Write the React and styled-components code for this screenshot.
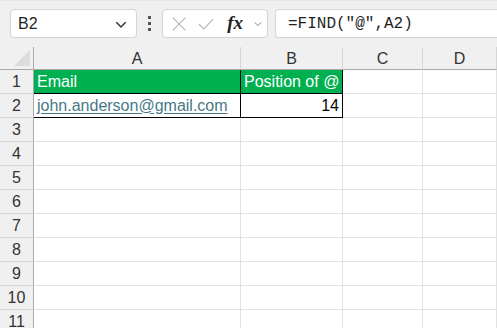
import React from "react";
import styled, { createGlobalStyle } from "styled-components";

const Global = createGlobalStyle`
  html, body { margin: 0; padding: 0; background: #f0f0f0; }
  body { font-family: "Liberation Sans", Arial, sans-serif; overflow: hidden; }
`;

const Page = styled.div`
  width: 497px;
  height: 328px;
  overflow: hidden;
  background: #f0f0f0;
`;

const FormulaBar = styled.div`
  height: 47px;
  box-sizing: border-box;
  padding: 8px 0 0 10px;
  display: flex;
  align-items: flex-start;
  border-top: 1px solid #e6e6e6;
`;

const Box = styled.div`
  height: 29px;
  box-sizing: border-box;
  background: #fff;
  border: 1px solid #d4d4d4;
  border-radius: 4px;
  display: flex;
  align-items: center;
`;

const NameBox = styled(Box)`
  width: 127px;
  padding: 0 8px 0 7px;
  justify-content: space-between;
  font-size: 16px;
  color: #1f1f1f;
`;

const Dots = styled.div`
  width: 25px;
  height: 29px;
  display: flex;
  flex-direction: column;
  align-items: center;
  justify-content: center;
  gap: 3px;
  span {
    width: 3px;
    height: 3px;
    background: #555;
  }
`;

const FxBox = styled(Box)`
  width: 106px;
  padding: 0 4px 0 8px;
  gap: 10px;
`;

const FxText = styled.span`
  font-family: "Liberation Serif", "Times New Roman", serif;
  font-style: italic;
  font-weight: bold;
  font-size: 19px;
  color: #222;
  margin-left: 2px;
  margin-top: -2px;
`;

const FormulaInput = styled(Box)`
  flex: 1;
  margin-left: 7px;
  border-right: none;
  border-radius: 4px 0 0 4px;
  padding-left: 12px;
  font-family: "Liberation Mono", "DejaVu Sans Mono", monospace;
  font-size: 16px;
  color: #1f1f1f;
`;

const Grid = styled.div`
  display: grid;
  grid-template-columns: 34px 207px 102px 80px 1fr;
  grid-template-rows: 23px repeat(11, 24px);
  background: #fff;
`;

const Cell = styled.div`
  box-sizing: border-box;
  border-right: 1px solid ${(p) => p.$right || "#e1e1e1"};
  border-bottom: 1px solid ${(p) => p.$bottom || "#e1e1e1"};
  background: ${(p) => p.$bg || "#fff"};
  color: ${(p) => p.$color || "#000"};
  font-size: 16px;
  display: flex;
  align-items: center;
  justify-content: ${(p) => (p.$align === "right" ? "flex-end" : "flex-start")};
  padding: 0 3px;
  white-space: nowrap;
  overflow: visible;
`;

const ColHead = styled.div`
  box-sizing: border-box;
  background: #f0f0f0;
  border-right: 1px solid #d6d6d6;
  border-bottom: 1px solid #a8a8a8;
  display: flex;
  align-items: center;
  justify-content: center;
  font-size: 16px;
  color: #333;
  padding-top: 1px;
`;

const Corner = styled(ColHead)`
  border-right: 1px solid #a8a8a8;
  position: relative;
  &::after {
    content: "";
    position: absolute;
    right: 3px;
    bottom: 3px;
    border-left: 16px solid transparent;
    border-bottom: 16px solid #dcdcdc;
  }
`;

const RowHead = styled.div`
  box-sizing: border-box;
  background: #f0f0f0;
  border-right: 1px solid #a8a8a8;
  border-bottom: 1px solid #d6d6d6;
  display: flex;
  align-items: center;
  justify-content: center;
  font-size: 16px;
  color: #333;
`;

const Link = styled.span`
  color: #467886;
  text-decoration: underline;
  text-underline-offset: 2px;
`;

const Chevron = ({ size = 12, color = "#333" }) => (
  <svg width={size} height={size} viewBox="0 0 12 12">
    <path d="M2 4.5 L6 8.5 L10 4.5" fill="none" stroke={color} strokeWidth="1.3" />
  </svg>
);

const XIcon = () => (
  <svg width="18" height="18" viewBox="0 0 18 18">
    <path d="M2 2 L16 16 M16 2 L2 16" stroke="#b8b8b8" strokeWidth="1.3" fill="none" />
  </svg>
);

const CheckIcon = () => (
  <svg width="20" height="18" viewBox="0 0 20 18">
    <path d="M2 9 L7.5 14.5 L18 3.5" stroke="#b8b8b8" strokeWidth="1.3" fill="none" />
  </svg>
);

const cols = ["A", "B", "C", "D"];
const rows = Array.from({ length: 11 }, (_, i) => i + 1);

export default function App() {
  const cellProps = (r, c) => {
    const p = {};
    if (r <= 2 && c <= 1) {
      p.$right = "#000";
      if (r === 1) p.$bottom = "#000";
      if (r === 2) p.$bottom = "#000";
    }
    if (r === 1 && c <= 1) {
      p.$bg = "#00b050";
      p.$color = "#fff";
    }
    return p;
  };
  const content = {
    "1-0": "Email",
    "1-1": "Position of @",
    "2-0": <Link>john.anderson@gmail.com</Link>,
    "2-1": "14",
  };
  return (
    <Page>
      <Global />
      <FormulaBar>
        <NameBox>
          <span>B2</span>
          <Chevron size={14} color="#333" />
        </NameBox>
        <Dots>
          <span />
          <span />
          <span />
        </Dots>
        <FxBox>
          <XIcon />
          <CheckIcon />
          <FxText>fx</FxText>
          <Chevron size={11} color="#aaa" />
        </FxBox>
        <FormulaInput>=FIND("@",A2)</FormulaInput>
      </FormulaBar>
      <Grid>
        <Corner />
        {cols.map((c) => (
          <ColHead key={c}>{c}</ColHead>
        ))}
        {rows.map((r) => (
          <React.Fragment key={r}>
            <RowHead>{r}</RowHead>
            {cols.map((c, ci) => (
              <Cell key={c} {...cellProps(r, ci)} $align={r === 2 && ci === 1 ? "right" : "left"}>
                {content[`${r}-${ci}`]}
              </Cell>
            ))}
          </React.Fragment>
        ))}
      </Grid>
    </Page>
  );
}
